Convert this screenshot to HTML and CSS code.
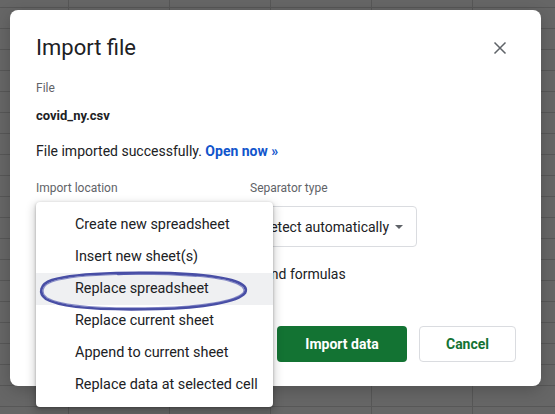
FILE: index.html
```html
<!DOCTYPE html>
<html lang="en">
<head>
<meta charset="utf-8">
<title>Import file</title>
<link rel="stylesheet" href="styles.css">
</head>
<body>
<div class="dialog">
  <div class="header">
    <h1 class="title">Import file</h1>
    <button class="close" aria-label="Close">
      <svg width="24" height="24" viewBox="0 0 24 24"><path d="M6.5 6.5 L17.5 17.5 M17.5 6.5 L6.5 17.5" stroke="#5f6368" stroke-width="1.5" fill="none"/></svg>
    </button>
  </div>
  <div class="label file-label">File</div>
  <div class="filename">covid_ny.csv</div>
  <div class="status">File imported successfully. <a class="open" href="#">Open now »</a></div>
  <div class="fields">
    <div class="field field-location">
      <div class="label">Import location</div>
      <div class="select select-location"><span class="arrow"></span></div>
      <div class="menu">
        <div class="item">Create new spreadsheet</div>
        <div class="item">Insert new sheet(s)</div>
        <div class="item item-hover">Replace spreadsheet</div>
        <div class="item">Replace current sheet</div>
        <div class="item">Append to current sheet</div>
        <div class="item">Replace data at selected cell</div>
        <svg class="marker" width="212" height="44" viewBox="0 0 212 44">
          <path d="M160 6 C110 2 40 3 14 11 C2 15 0 24 8 30 C25 40 80 41 120 40 C165 39 200 33 207 24 C212 15 195 8 150 5 C120 3 95 4 80 5" fill="none" stroke="#3e45a0" stroke-width="2.6" stroke-linecap="round" opacity="0.95"/>
          <path d="M158 7.5 C110 3.5 42 4.5 15 12.5 C4 16 2 24 9.5 29 C26 38.5 80 39.5 120 38.6 C164 37.8 198 32 205.5 23.5 C209 16 193 9.5 150 6.5" fill="none" stroke="#5a60b4" stroke-width="1.2" stroke-linecap="round" opacity="0.7"/>
        </svg>
      </div>
    </div>
    <div class="field field-separator">
      <div class="label">Separator type</div>
      <div class="select select-separator"><span>Detect automatically</span><span class="arrow"></span></div>
    </div>
  </div>
  <label class="check-row"><span class="checkbox"></span><span class="check-text">Convert text to numbers, dates, and formulas</span></label>
  <div class="actions">
    <button class="btn btn-primary">Import data</button>
    <button class="btn btn-secondary">Cancel</button>
  </div>
</div>
</body>
</html>
```

FILE: styles.css
```css
* { box-sizing: border-box; }
html, body { margin: 0; padding: 0; }
body {
  width: 555px;
  height: 414px;
  overflow: hidden;
  font-family: Roboto, "Liberation Sans", Arial, sans-serif;
  background-color: #666666;
  background-image:
    linear-gradient(to right, #575757 1px, transparent 1px),
    linear-gradient(to bottom, #575757 1px, transparent 1px);
  background-size: 101px 21px;
  background-position: 68px 7px;
  padding: 10px 0 0 10px;
}
.dialog {
  width: 531px;
  height: 376px;
  background: #ffffff;
  border-radius: 8px;
  padding: 24px 25px 24px 26px;
  display: flex;
  flex-direction: column;
  box-shadow: 0 4px 16px rgba(0,0,0,0.2);
}
.header {
  display: flex;
  align-items: center;
  justify-content: space-between;
  height: 28px;
}
.title {
  margin: 0;
  font-size: 22px;
  line-height: 28px;
  font-weight: 400;
  color: #202124;
}
.close {
  width: 24px;
  height: 24px;
  padding: 0;
  border: 0;
  background: none;
  margin-right: 4px;
  display: flex;
}
.label {
  font-size: 12px;
  line-height: 16px;
  color: #5f6368;
}
.file-label { margin-top: 18px; }
.filename {
  margin-top: 10px;
  font-size: 13px;
  line-height: 20px;
  font-weight: 700;
  color: #202124;
}
.status {
  margin-top: 15px;
  font-size: 14px;
  line-height: 20px;
  color: #202124;
}
.open {
  color: #1155cc;
  font-weight: 700;
  text-decoration: none;
}
.fields {
  margin-top: 19px;
  display: flex;
}
.field { display: flex; flex-direction: column; }
.field-location { width: 214px; position: relative; }
.select {
  margin-top: 10px;
  height: 41px;
  border: 1px solid #dadce0;
  border-radius: 4px;
  display: flex;
  align-items: center;
  justify-content: space-between;
  padding: 0 13px 0 10px;
  font-size: 14px;
  color: #202124;
}
.select-location { width: 200px; justify-content: flex-end; }
.select-separator { width: 167px; }
.arrow {
  width: 0;
  height: 0;
  border-left: 4px solid transparent;
  border-right: 4px solid transparent;
  border-top: 4px solid #5f6368;
  margin-top: 1px;
}
.menu {
  position: absolute;
  left: 0;
  top: 22px;
  width: 237px;
  height: 205px;
  background: #ffffff;
  border-radius: 4px;
  padding: 7px 0 6px;
  box-shadow: 0 1px 3px rgba(0,0,0,0.3), 0 4px 8px 3px rgba(0,0,0,0.15);
  z-index: 2;
}
.item {
  height: 32px;
  line-height: 32px;
  padding-left: 39px;
  font-size: 14.4px;
  color: #202124;
  white-space: nowrap;
}
.item-hover { background: #eff0f2; }
.marker {
  position: absolute;
  left: 2px;
  top: 67px;
}
.check-row {
  margin-top: 17px;
  display: flex;
  align-items: center;
  height: 20px;
  font-size: 14px;
  color: #202124;
}
.checkbox {
  width: 18px;
  height: 18px;
  border: 2px solid #5f6368;
  border-radius: 2px;
  margin-right: 12px;
}
.check-text { line-height: 20px; }
.actions {
  margin-top: 42px;
  display: flex;
  justify-content: flex-end;
  gap: 12px;
}
.btn {
  height: 36px;
  border-radius: 4px;
  font-family: Roboto, "Liberation Sans", Arial, sans-serif;
  font-size: 14px;
  font-weight: 700;
  cursor: pointer;
}
.btn-primary {
  width: 130px;
  background: #137333;
  color: #ffffff;
  border: 0;
}
.btn-secondary {
  width: 97px;
  background: #ffffff;
  color: #137333;
  border: 1px solid #dadce0;
}
```
